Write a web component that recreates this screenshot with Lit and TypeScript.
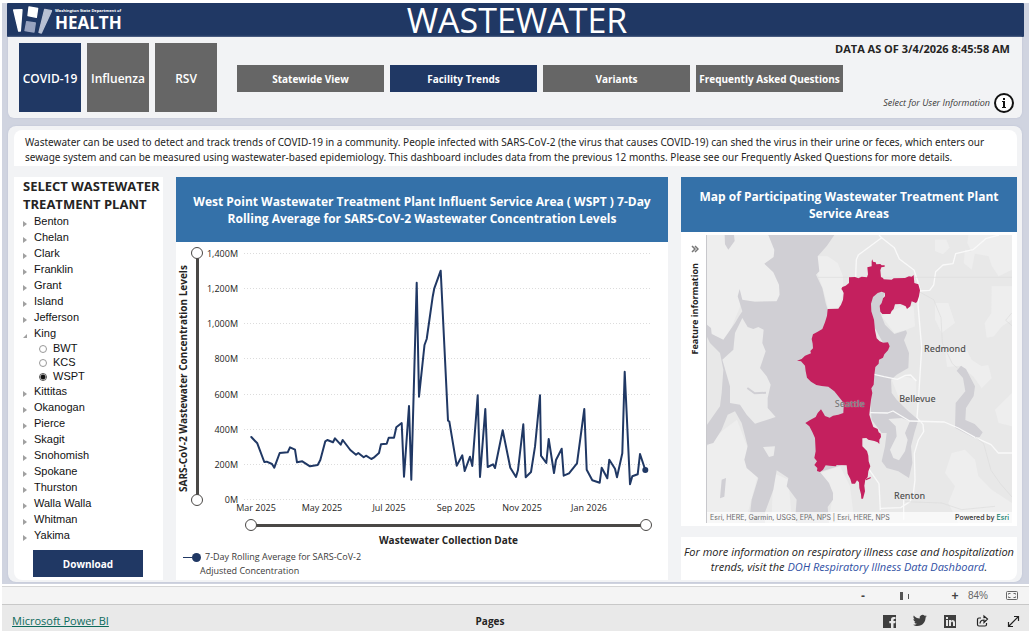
import { LitElement, html, svg, css } from "lit";
import { customElement, property, state } from "lit/decorators.js";
import { classMap } from "lit/directives/class-map.js";

type County = { name: string; plants?: string[] };

const COUNTIES: County[] = [
  { name: "Benton" },
  { name: "Chelan" },
  { name: "Clark" },
  { name: "Franklin" },
  { name: "Grant" },
  { name: "Island" },
  { name: "Jefferson" },
  { name: "King", plants: ["BWT", "KCS", "WSPT"] },
  { name: "Kittitas" },
  { name: "Okanogan" },
  { name: "Pierce" },
  { name: "Skagit" },
  { name: "Snohomish" },
  { name: "Spokane" },
  { name: "Thurston" },
  { name: "Walla Walla" },
  { name: "Whitman" },
  { name: "Yakima" },
];

const SERIES =
  "251.3,437 257.3,443.3 264.3,462 266.7,461.7 272,464 274.3,467.7 279.7,453 287.7,452.3 290,447.3 295,449.7 297,462.3 302.3,461.3 310,466.3 317.7,465 320.3,460 325.3,441.3 327.3,440 333,442.3 335,438.3 340.7,444.7 342.7,440 350.3,450 356,454.7 358.3,453 363.7,457.3 366,455.7 371.3,459 373.7,457.7 379,453 381,444.3 386.7,443.7 388.7,437.7 394,437.7 396.3,427.3 401.7,423 404,476.7 409,406 411.3,479.7 416.7,282.7 419,396.7 424.5,345 426.7,339 432.7,296.7 434.3,288.3 440.7,270.7 448,420.7 449.3,421.3 456.7,465.7 462.3,455.3 464.7,471 470,456.7 472.3,466 477.7,395.3 480,477 485.3,409 487.7,467 493,464.3 495,468 502.7,430.3 510.3,467.7 516,477 518,470 523.3,424.3 525.7,477.3 531,472 535,446.7 540,395.3 541,455.7 546.3,463 548.7,439 554,473 556,460 561.7,448.7 563.7,475.7 569,473.3 577,463.3 584.3,409 586.7,469.7 592.3,480.3 599.7,482.7 601.7,467.7 607.3,478.3 609.3,459.7 615,468.7 617,477.3 622.3,453.3 624.7,371.7 630,484.3 632.3,476.3 637.7,474.3 640,454 645.3,470";

const X_TICKS: [string, number][] = [
  ["Mar 2025", 256],
  ["May 2025", 322],
  ["Jul 2025", 389],
  ["Sep 2025", 456],
  ["Nov 2025", 522],
  ["Jan 2026", 589],
];

const SERVICE_AREA =
  "502,79 504,86 512,88 514,94 526,93 530,97 539,97 539,101 529,103 526,112 528,132 534,135 536,139 560,140 566,136 600,135 612,130 620,131 626,126 628,150 640,154 645,172 642,190 637,205 633,210 620,205 616,220 606,228 602,220 594,216 586,213 570,214 566,228 560,234 556,243 532,243 526,236 524,218 530,210 534,196 540,190 540,180 530,176 518,180 504,192 498,212 499,235 507,260 510,292 515,316 524,325 535,329 549,328 554,340 549,352 538,364 534,374 522,380 521,392 511,402 508,425 506,455 499,466 502,480 498,500 495,525 493,545 498,562 505,582 518,588 521,598 527,602 528,612 523,620 523,633 518,628 508,624 490,620 484,615 472,616 472,640 486,654 490,668 491,685 496,700 490,715 488,732 481,740 478,758 480,775 476,790 474,797 469,797 468,784 463,765 462,748 456,742 450,752 440,752 436,738 428,722 425,697 395,696 392,700 374,698 362,697 354,710 345,717 336,714 337,705 328,696 336,685 328,675 332,655 330,615 322,597 313,580 301,570 314,562 332,552 338,540 348,529 355,540 360,549 374,554 384,548 400,545 415,540 416,520 412,505 400,490 388,475 370,461 350,459 334,456 318,446 306,434 302,415 300,398 288,385 276,383 290,378 300,368 318,361 316,354 324,346 323,332 320,318 324,304 338,296 352,288 360,268 366,248 368,228 400,227 408,215 414,200 416,180 412,172 409,168 412,162 422,158 432,150 432,133 450,132 460,136 470,131 486,133 489,124 487,103 500,100 500,84";

@customElement("range-pair")
export class RangePair extends LitElement {
  @property({ type: Boolean, reflect: true }) vertical = false;
  @property() label = "";

  static styles = css`
    :host {
      display: grid;
      height: 12px;
      background: linear-gradient(#4a4846, #4a4846) center / calc(100% - 12px) 3px no-repeat;
    }
    :host([vertical]) {
      width: 12px;
      height: auto;
      background-size: 3px calc(100% - 12px);
    }
    .range {
      grid-area: 1 / 1;
      appearance: none;
      -webkit-appearance: none;
      background: transparent;
      margin: 0;
      width: 100%;
      height: 12px;
      pointer-events: none;
    }
    :host([vertical]) .range {
      writing-mode: vertical-lr;
      direction: rtl;
      width: 12px;
      height: 100%;
    }
    .range::-webkit-slider-thumb {
      -webkit-appearance: none;
      box-sizing: border-box;
      width: 12px;
      height: 12px;
      border: 1px solid #4a4846;
      border-radius: 50%;
      background: #fff;
      pointer-events: auto;
    }
  `;

  render() {
    return html`
      <input class="range" type="range" value="0" aria-label="${this.label} start" />
      <input class="range" type="range" value="100" aria-label="${this.label} end" />
    `;
  }
}

@customElement("plant-tree")
export class PlantTree extends LitElement {
  @state() private open = new Set<string>(["King"]);
  @state() private plant = "WSPT";

  static styles = css`
    .tree,
    .plants {
      list-style: none;
      margin: 0;
      padding: 0;
      font: 11px/16px "Liberation Sans", Arial, sans-serif;
      color: #111;
    }
    .county {
      display: flex;
      align-items: center;
      width: 100%;
      height: 16px;
      padding: 0 0 0 9px;
      gap: 7px;
      border: 0;
      background: none;
      font: inherit;
      color: inherit;
      text-align: left;
      cursor: pointer;
    }
    .arrow {
      flex: none;
      width: 4px;
      height: 6px;
      margin-top: 5px;
      fill: #a0a0a0;
    }
    .plant {
      display: flex;
      align-items: center;
      height: 14px;
      line-height: 14px;
      padding-left: 25px;
      gap: 6px;
    }
    .radio {
      appearance: none;
      -webkit-appearance: none;
      box-sizing: border-box;
      width: 8px;
      height: 8px;
      margin: 2px 0 0;
      border: 1px solid #999;
      border-radius: 50%;
      background: #fff;
    }
    .radio:checked {
      border-color: #555;
      background: radial-gradient(circle, #111 0 2px, #fff 3px);
    }
  `;

  private toggle(name: string) {
    const next = new Set(this.open);
    next.has(name) ? next.delete(name) : next.add(name);
    this.open = next;
  }

  render() {
    return html`<ul class="tree">
      ${COUNTIES.map((c) => {
        const open = this.open.has(c.name);
        return html`<li>
          <button class="county" aria-expanded=${open} @click=${() => this.toggle(c.name)}>
            <svg class="arrow" viewBox="0 0 4 6" aria-hidden="true">
              <path d=${open ? "M4 1v4H0z" : "M0 0l4 3-4 3z"} />
            </svg>
            ${c.name}
          </button>
          ${open && c.plants
            ? html`<ul class="plants">
                ${c.plants.map(
                  (p) => html`<li>
                    <label class="plant">
                      <input
                        class="radio"
                        type="radio"
                        name="plant"
                        .checked=${p === this.plant}
                        @change=${() => (this.plant = p)}
                      />${p}
                    </label>
                  </li>`
                )}
              </ul>`
            : null}
        </li>`;
      })}
    </ul>`;
  }
}

@customElement("trend-chart")
export class TrendChart extends LitElement {
  static styles = css`
    :host {
      display: block;
    }
    .plot {
      display: grid;
      grid-template-columns: 13px 12px 1fr;
      padding-left: 1px;
      column-gap: 1px;
    }
    .y-title {
      writing-mode: vertical-rl;
      transform: rotate(180deg);
      text-align: center;
      font-weight: 700;
      font-size: 10px;
      line-height: 13px;
      color: #252423;
      white-space: nowrap;
    }
    .y-range {
      margin: 5px 0 10px;
    }
    .svg {
      display: block;
      width: 100%;
      height: auto;
    }
    .grid {
      stroke: #dcdcdc;
      stroke-width: 1;
      stroke-dasharray: 1 2;
    }
    .tick {
      font-size: 9px;
      fill: #252423;
    }
    .end {
      text-anchor: end;
    }
    .mid {
      text-anchor: middle;
    }
    .line {
      fill: none;
      stroke: #203864;
      stroke-width: 2;
      stroke-linejoin: round;
      stroke-linecap: round;
    }
    .dot {
      fill: #203864;
    }
    .x-range {
      margin: 3px 16px 0 69px;
    }
    .x-title {
      margin: 1px 16px 0 69px;
      text-align: center;
      font-weight: 700;
      font-size: 10px;
      line-height: 16px;
      color: #252423;
    }
    .legend {
      display: grid;
      grid-template-columns: 18px 1fr;
      column-gap: 4px;
      padding: 2px 0 0 7px;
      font-size: 9px;
      line-height: 14px;
      color: #3b3a39;
    }
    .marker {
      width: 18px;
      height: 14px;
    }
    .cont {
      grid-column: 1 / -1;
      padding-left: 17px;
    }
  `;

  render() {
    return html`
      <div class="plot">
        <div class="y-title">SARS-CoV-2 Wastewater Concentration Levels</div>
        <range-pair class="y-range" vertical label="Concentration"></range-pair>
        <svg class="svg" viewBox="204 242 464 274" role="img" aria-label="7-Day Rolling Average">
          ${[1400, 1200, 1000, 800, 600, 400, 200, 0].map((v, i) => {
            const y = Math.round(252.7 + i * 35.25) + 0.5;
            return svg`<line class="grid" x1="244" x2="650" y1=${y} y2=${y} />
              <text class="tick end" x="238" y=${y + 3}>${v.toLocaleString("en-US")}M</text>`;
          })}
          ${X_TICKS.map(([t, x]) => svg`<text class="tick mid" x=${x} y="511">${t}</text>`)}
          <polyline class="line" points=${SERIES} />
          <circle class="dot" cx="645.3" cy="470" r="3" />
        </svg>
      </div>
      <range-pair class="x-range" label="Collection date"></range-pair>
      <div class="x-title">Wastewater Collection Date</div>
      <div class="legend">
        <svg class="marker" viewBox="0 0 18 14" aria-hidden="true">
          <path d="M0 7.500h9" stroke="#203864" />
          <circle class="dot" cx="13.500" cy="7.500" r="4.500" />
        </svg>
        <span>7-Day Rolling Average for SARS-CoV-2</span>
        <span class="cont">Adjusted Concentration</span>
      </div>
    `;
  }
}

@customElement("service-map")
export class ServiceMap extends LitElement {
  static styles = css`
    :host {
      display: block;
      position: relative;
      overflow: hidden;
      border-left: 1px solid #c8c8cc;
    }
    .canvas {
      position: absolute;
      inset: 0;
      width: 100%;
      height: 100%;
    }
    .place {
      position: absolute;
      transform: translate(-50%, -50%);
      font: 500 9px/12px "Noto Sans", sans-serif;
      color: #505050;
      text-shadow: 0 0 2px #eee;
    }
    .seattle {
      left: 46.8%;
      top: 58.6%;
      color: #777;
      text-shadow: 0 0 1px #ddd;
    }
    .redmond {
      left: 78%;
      top: 39.5%;
    }
    .bellevue {
      left: 69%;
      top: 56.8%;
    }
    .renton {
      left: 66.4%;
      top: 90.5%;
    }
    .credit {
      position: absolute;
      left: 0;
      right: 0;
      bottom: 0;
      display: flex;
      justify-content: space-between;
      padding: 0 3px;
      background: rgba(255, 255, 255, 0.7);
      font: 7px/11px Inter, sans-serif;
      color: #6a6a6a;
    }
    .powered {
      color: #323232;
      font-weight: 500;
    }
    .esri {
      color: #0f7d6b;
      text-decoration: none;
    }
  `;

  render() {
    return html`
      <svg class="canvas" viewBox="6 6 915 864" preserveAspectRatio="xMidYMid slice" role="img" aria-label="Service area map">
        <rect x="6" y="6" width="915" height="864" fill="#e8e8e8" />
        <g fill="#eeeeee">
          <path d="M6 6H190L208 50 206 72 178 92 205 118 222 155 224 185 215 205H112L60 330 6 290zM338 70l30 0 30 20 16 40 0 50-14 44-30 4-16-60-18-50z" />
          <path d="M690 20h34l10 24-20 20-24-10zM790 6h131V110l-40 20-20-30-10-30-50-10-14-30zM690 210h40l20 60-40 30-20-40zM780 50l30 10-10 50-24-20zM860 160h61v100l-30 20-24 30-22 4-6-44 20-30zM720 350l60-10 20 40 30 20 20-4 10 40-30 30-24-34-40-34-40 4z" />
          <path d="M6 640l50-50 40-30 30 80 2 60 30 30-30 110H6zM205 720l45 20 10 110h-60zM740 660l40-10 30 30 10 50 40 40 61 40v60H760l-30-60 20-50-30-40zM870 530l51-50v100l-40-10zM345 720l60-20 30 60 10 80h-70l10-60zM530 250l60-30 36 0 4 60-30 12-32 8zM560 440l40-10 34 10 0 50-50 10z" />
        </g>
        <g fill="#d0cfd4">
          <path d="M190 6H388L366 38 338 70 343 115 333 125 352 165 362 210 368 230 420 300 440 500 430 690 345 717 372 750 384 780 384 800 368 822 372 870H272V838L275 800 245 760 250 735 215 712 205 770 180 838V870H132L140 800 160 735 125 705 118 680 128 640 118 600 110 570 90 535 68 545 50 590 25 630 6 635V575L45 520 50 480 55 410 45 360 15 330 6 312V275L18 285 20 303 40 313 55 320 90 270 102 250 112 235 98 190 104 168 112 200 150 206 215 205 224 185 222 155 205 118 178 92 206 72 208 50z" />
          <path d="M59 6h28l2 18-19 26-10-16zM50 740l13-5-5 56-13 5z" />
          <path d="M500 178H541L532 200 526 240 540 275 568 303 603 292 606 300 597 322 612 360 610 405 598 412 575 425 558 440 560 480 575 500 610 535 640 560 628 600 618 640 622 690 612 735 580 715 545 705 530 685 540 640 545 600 530 600 500 560 495 500 500 420 540 340 490 250z" />
          <path d="M768 398l15 10 27 52-4 29-23 36-2 36 28 12 24 25-9 14-18 2-56-30 2-74 29-35-7-40-19-22z" />
        </g>
        <g fill="#ebebeb">
          <path d="M112 255L128 282 145 288 160 282 176 290 172 330 182 355 165 405 185 430 197 455 188 495V525L212 552 150 572 125 545 105 515 75 510V460L52 380 85 350 90 300zM174 642l36-2-4 28-14 4z" />
          <path d="M550 558L572 580 575 610 555 650 565 675 582 682 600 655 608 620 600 600 615 565 590 555z" />
        </g>
        <path d="M127 465l22 16 34-2" fill="none" stroke="#d0cfd4" stroke-width="6" />
        <g fill="none" stroke="#f9f9f9" stroke-width="4" stroke-linejoin="round">
          <path d="M522 6l8 8 38 30 15 34 44 33 10 30 8 28-6 45 5 60 6 70-8 130-6 80 18 20 2 22-16 25-12 40 2 80-5 40-10 25-28 18-60 2M530 14l-70 52-6 14-2 52M640 174l34-2 12-16 6-40 22-20 30-4 8-30 52-12 40-34 38-10M507 424l30 7 40 8 24-12 16-1 17 18M494 539l54 1 16-6 50 30 104 3 42 18 50 28 48 22 22 25 41 0M490 706l32 46 4 80M596 800v60" />
        </g>
        <path d="M338 133H921M642 176l44 24 22 54 4 76 30 62 16 14M920 240l-18 22 19 16M810 612l26 20 22 80 28 40 35 40M600 806l110 4 60 20 100-10" fill="none" stroke="#dcdcdc" stroke-width="2" />
        <polygon fill="#c4205e" points=${SERVICE_AREA} />
        <path d="M482 738l15-6v4l-14 6z" fill="#c4205e" />
      </svg>
      <span class="place seattle">Seattle</span>
      <span class="place redmond">Redmond</span>
      <span class="place bellevue">Bellevue</span>
      <span class="place renton">Renton</span>
      <div class="credit">
        <span>Esri, HERE, Garmin, USGS, EPA, NPS | Esri, HERE, NPS</span>
        <span class="powered">Powered by <a class="esri" href="#esri">Esri</a></span>
      </div>
    `;
  }
}

@customElement("app-root")
export class AppRoot extends LitElement {
  @state() private virus = "COVID-19";
  @state() private page = "Facility Trends";

  static styles = css`
    :host {
      display: block;
      padding: 3px 4px 0 2px;
      background: #fff;
      font-family: "Open Sans", "Noto Sans", sans-serif;
      color: #252423;
    }
    .report {
      padding: 0 5px 2px 5px;
      background: #d0d4e0;
    }
    .banner {
      display: grid;
      grid-template-columns: 1fr auto 1fr;
      align-items: center;
      height: 34px;
      background: #203864;
      color: #fff;
      border-radius: 1px;
    }
    .logo {
      display: flex;
      align-items: center;
      gap: 3px;
      padding-left: 5px;
    }
    .mark {
      width: 40px;
      height: 30px;
    }
    .brand-small {
      display: block;
      font-weight: 700;
      font-size: 4px;
      line-height: 6px;
      white-space: nowrap;
    }
    .brand {
      display: block;
      font-weight: 700;
      font-size: 17px;
      line-height: 18px;
    }
    .title {
      margin: 0;
      padding-left: 3px;
      font-weight: 500;
      font-size: 34px;
      line-height: 34px;
    }
    .card {
      margin: 0 2px 0 1px;
      background: #f2f3f5;
      box-shadow: 0 0 2px #b9bfd2;
    }
    .head {
      display: flex;
      align-items: flex-start;
      height: 75px;
      padding: 6px 8px 0 11px;
      box-sizing: content-box;
      border-radius: 0 0 6px 6px;
    }
    .tabs {
      display: flex;
      gap: 6px;
    }
    .tab {
      width: 62px;
      height: 69px;
      padding: 2px 0 0;
      border: 0;
      background: #666;
      color: #fff;
      font: 600 12px/18px "Open Sans", sans-serif;
    }
    .nav {
      display: flex;
      gap: 6px;
      flex: 1;
      margin: 22px 0 0 20px;
    }
    .link {
      width: 147px;
      height: 27px;
      padding: 0;
      border: 0;
      background: #666;
      color: #fff;
      font: 700 10px/16px "Open Sans", sans-serif;
      white-space: nowrap;
    }
    .active {
      background: #203864;
    }
    .meta {
      display: flex;
      flex-direction: column;
      align-items: flex-end;
      justify-content: space-between;
      height: 70px;
      margin-left: -100px;
    }
    .asof {
      padding-right: 4px;
      font-weight: 700;
      font-size: 11px;
      line-height: 11px;
    }
    .info {
      display: flex;
      align-items: center;
      gap: 4px;
      padding: 0;
      border: 0;
      background: none;
      font: italic 9px/20px "Open Sans", sans-serif;
      color: #3b3a39;
    }
    .info-icon {
      width: 20px;
      height: 20px;
    }
    .body {
      margin-top: 8px;
      padding: 4px 5px 2px 6px;
      border-radius: 8px;
    }
    .intro {
      margin: 0 0 11px;
      padding: 5px 11px 1px;
      border-radius: 8px 8px 0 0;
      background: #fff;
      font-family: "Noto Sans", sans-serif;
      font-size: 10px;
      line-height: 15px;
    }
    .columns {
      display: grid;
      grid-template-columns: 149px 1fr 336px;
      column-gap: 13px;
    }
    .panel {
      background: #fff;
    }
    .side {
      border-radius: 0 0 0 8px;
      padding-bottom: 3px;
    }
    .side-title {
      margin: 0;
      padding: 0 0 0 9px;
      font-weight: 700;
      font-size: 13px;
      line-height: 18px;
      white-space: nowrap;
    }
    .download {
      display: block;
      width: 110px;
      height: 27px;
      margin: 7px 0 0 19px;
      padding: 0;
      border: 0;
      background: #203864;
      color: #fff;
      font: 700 10px/16px "Open Sans", sans-serif;
    }
    .heading {
      display: flex;
      align-items: center;
      justify-content: center;
      margin: 0;
      background: #3471a9;
      color: #fff;
      text-align: center;
      font-weight: 700;
      font-size: 12px;
      line-height: 17px;
    }
    .tall {
      height: 65px;
    }
    .short {
      height: 55px;
    }
    .right {
      display: flex;
      flex-direction: column;
      gap: 11px;
    }
    .map-panel {
      display: flex;
      flex-direction: column;
      flex: 1;
    }
    .map-row {
      display: flex;
      flex: 1;
      padding: 3px 5px 3px 6px;
    }
    .map {
      flex: 1;
    }
    .feature {
      display: flex;
      flex-direction: column;
      align-items: center;
      gap: 10px;
      width: 19px;
      padding: 10px 3px 0 0;
      border: 0;
      background: none;
      font: 700 9px/16px "Open Sans", sans-serif;
      color: #252423;
    }
    .chevrons {
      width: 8px;
      height: 8px;
    }
    .feature-text {
      writing-mode: vertical-rl;
      transform: rotate(180deg);
    }
    .more {
      padding: 7px 0 6px;
      border-radius: 0 0 8px 0;
      text-align: center;
      font-style: italic;
      font-size: 11px;
      line-height: 15px;
    }
    .doh {
      color: #2f4fa3;
      text-decoration: none;
    }
    .zoombar {
      display: flex;
      align-items: center;
      justify-content: flex-end;
      height: 17px;
      margin-top: 2px;
      padding-right: 11px;
      border-top: 1px solid #d6d6d6;
      border-bottom: 1px solid #c8c8c8;
      background: #f4f4f4;
      color: #444;
      font: 10px/17px "Liberation Sans", sans-serif;
    }
    .step {
      width: 10px;
      padding: 0;
      border: 0;
      background: none;
      color: #444;
      font: 700 12px/12px "Liberation Sans", sans-serif;
    }
    .zoom {
      appearance: none;
      -webkit-appearance: none;
      width: 82px;
      height: 10px;
      margin: 0;
      background: linear-gradient(#555, #555) 40px 3px / 1px 5px no-repeat;
    }
    .zoom::-webkit-slider-thumb {
      -webkit-appearance: none;
      width: 3px;
      height: 8px;
      background: #555;
    }
    .pct {
      margin: 0 18px 0 8px;
      color: #666;
    }
    .glyph {
      display: block;
      border: 0;
      padding: 0;
      background: none;
    }
    .icon {
      display: block;
      width: 14px;
      height: 14px;
    }
    .footer {
      display: grid;
      grid-template-columns: 1fr auto 1fr;
      align-items: center;
      height: 26px;
      padding: 6px 9px 0 10px;
      box-sizing: border-box;
      background: #e9e9e9;
      font-size: 11px;
      line-height: 16px;
    }
    .bi {
      color: #0d6b5c;
    }
    .pages {
      font-weight: 700;
      padding-right: 52px;
      font-size: 10px;
    }
    .social {
      display: flex;
      justify-content: flex-end;
      gap: 17px;
    }
    .social-link {
      display: block;
      color: #3f3f3f;
    }
  `;

  render() {
    return html`
      <main class="report">
        <header class="banner">
          <div class="logo">
            <svg class="mark" viewBox="0 0 120 90" aria-hidden="true">
              <g stroke-linejoin="round" stroke-width="4">
                <path d="M5 15l25-1-5 64h-5z" fill="#fff" stroke="#fff" />
                <path d="M51 6l26 4-4 27-25-5z" fill="#fff" stroke="#fff" />
                <path d="M44 50l26 4-4 27-27-4z" fill="#98a3bf" stroke="#98a3bf" />
                <path d="M98 13l21 4-31 67-7-2z" fill="#b9c1d3" stroke="#b9c1d3" />
              </g>
            </svg>
            <div>
              <span class="brand-small">Washington State Department of</span>
              <span class="brand">HEALTH</span>
            </div>
          </div>
          <h1 class="title">WASTEWATER</h1>
        </header>
        <section class="card head">
          <div class="tabs">
            ${["COVID-19", "Influenza", "RSV"].map(
              (v) => html`<button
                class=${classMap({ tab: true, active: v === this.virus })}
                @click=${() => (this.virus = v)}
              >
                ${v}
              </button>`
            )}
          </div>
          <nav class="nav">
            ${["Statewide View", "Facility Trends", "Variants", "Frequently Asked Questions"].map(
              (p) => html`<button
                class=${classMap({ link: true, active: p === this.page })}
                @click=${() => (this.page = p)}
              >
                ${p}
              </button>`
            )}
          </nav>
          <div class="meta">
            <span class="asof">DATA AS OF 3/4/2026 8:45:58 AM</span>
            <button class="info">
              Select for User Information
              <svg class="info-icon" viewBox="0 0 20 20" aria-hidden="true">
                <circle cx="10" cy="10" r="9" fill="#fff" stroke="#111" stroke-width="2" />
                <path d="M9 5h2v2H9zM8 8h3v6h1v1H8v-1h1V9H8z" fill="#111" />
              </svg>
            </button>
          </div>
        </section>

        <section class="card body">
          <p class="intro">
            Wastewater can be used to detect and track trends of COVID-19 in a community. People infected with
            SARS-CoV-2 (the virus that causes COVID-19) can shed the virus in their urine or feces, which enters
            our<br />sewage system and can be measured using wastewater-based epidemiology. This dashboard includes
            data from the previous 12 months. Please see our Frequently Asked Questions for more details.
          </p>
          <div class="columns">
            <aside class="panel side">
              <h2 class="side-title">SELECT WASTEWATER<br />TREATMENT PLANT</h2>
              <plant-tree></plant-tree>
              <button class="download">Download</button>
            </aside>
            <section class="panel">
              <h2 class="heading tall">
                West Point Wastewater Treatment Plant Influent Service Area ( WSPT ) 7-Day<br />Rolling Average for
                SARS-CoV-2 Wastewater Concentration Levels
              </h2>
              <trend-chart></trend-chart>
            </section>
            <div class="right">
              <section class="panel map-panel">
                <h2 class="heading short">
                  Map of Participating Wastewater Treatment Plant<br />Service Areas
                </h2>
                <div class="map-row">
                  <button class="feature">
                    <svg class="chevrons" viewBox="0 0 8 8" aria-hidden="true">
                      <path d="M1 1l3 3-3 3M4 1l3 3-3 3" fill="none" stroke="#777" stroke-width="1.500" />
                    </svg>
                    <span class="feature-text">Feature information</span>
                  </button>
                  <service-map class="map"></service-map>
                </div>
              </section>
              <section class="panel more">
                For more information on respiratory illness case and hospitalization<br />trends, visit the
                <a class="doh" href="#doh">DOH Respiratory Illness Data Dashboard</a>.
              </section>
            </div>
          </div>
        </section>
      </main>

      <div class="zoombar">
        <button class="step" aria-label="Zoom out">-</button>
        <input class="zoom" type="range" min="10" max="160" value="70" aria-label="Zoom" />
        <button class="step" aria-label="Zoom in">+</button>
        <span class="pct">84%</span>
        <button class="glyph" aria-label="Fit to page">
          <svg width="12" height="10" viewBox="0 0 12 10" fill="none" stroke="#666">
            <rect x="0.500" y="1.500" width="11" height="8" rx="1" />
            <path d="M2.500 4.500v-1h2M7.500 3.500h2v1M9.500 6.500v1h-2M4.500 7.500h-2v-1" />
          </svg>
        </button>
      </div>
      <footer class="footer">
        <a class="bi" href="#powerbi">Microsoft Power BI</a>
        <span class="pages">Pages</span>
        <div class="social">
          <a class="social-link" href="#facebook" aria-label="Facebook">
            <svg class="icon" viewBox="0 0 14 14">
              <path fill="currentColor" d="M1 1h13v13h-2.500V9.200h1.800l.3-2.200h-2.100V5.800q0-.9 1-.9H13.500V3H11.500Q9 3 9 5.500V7H7.300v2.200H9V14H1z" />
            </svg>
          </a>
          <a class="social-link" href="#twitter" aria-label="Twitter">
            <svg class="icon" viewBox="0 0 24 24">
              <path fill="currentColor" d="M23.600 3.900c-.9.400-1.800.7-2.800.8 1-.6 1.800-1.600 2.200-2.700-.9.600-2 1-3.100 1.200A4.900 4.900 0 0 0 11.500 7.700C7.400 7.500 3.800 5.500 1.400 2.500c-1.300 2.200-.7 5.100 1.500 6.600-.8 0-1.600-.2-2.200-.6-.1 2.300 1.600 4.400 3.900 4.900-.7.200-1.500.2-2.200.1.600 2 2.400 3.400 4.600 3.400A9.900 9.900 0 0 1 0 18.500c2.200 1.400 4.800 2.200 7.500 2.200 9.100 0 14.300-7.700 14-14.600.8-.6 1.600-1.400 2.100-2.200z" />
            </svg>
          </a>
          <a class="social-link" href="#linkedin" aria-label="LinkedIn">
            <svg class="icon" viewBox="0 0 14 14">
              <path fill="currentColor" fill-rule="evenodd" d="M0 1h12v13H0zM2 6v6h2V6zM2 3v2h2V3zM5 6v6h2V9q0-1.500 1-1.500T9 9v3h2V8.500Q11 6 8.800 6 7.500 6 7 7V6z" />
            </svg>
          </a>
          <a class="social-link" href="#share" aria-label="Share">
            <svg class="icon" viewBox="0 0 14 14" fill="none" stroke="#222" stroke-width="1.200">
              <path d="M6 4H4Q2.500 4 2.500 5.500v5Q2.500 12 4 12h6q1.500 0 1.500-1.500V9" />
              <path d="M5 9.500Q5.200 6 9 6v2.500L12.500 5 9 2v2.300" />
            </svg>
          </a>
          <a class="social-link" href="#fullscreen" aria-label="Full screen">
            <svg class="icon" viewBox="0 0 14 14" fill="none" stroke="#222" stroke-width="1.200">
              <path d="M3 12l9-9M8 2.500h4.500V7M2.500 8v4.500H7" />
            </svg>
          </a>
        </div>
      </footer>
    `;
  }
}
